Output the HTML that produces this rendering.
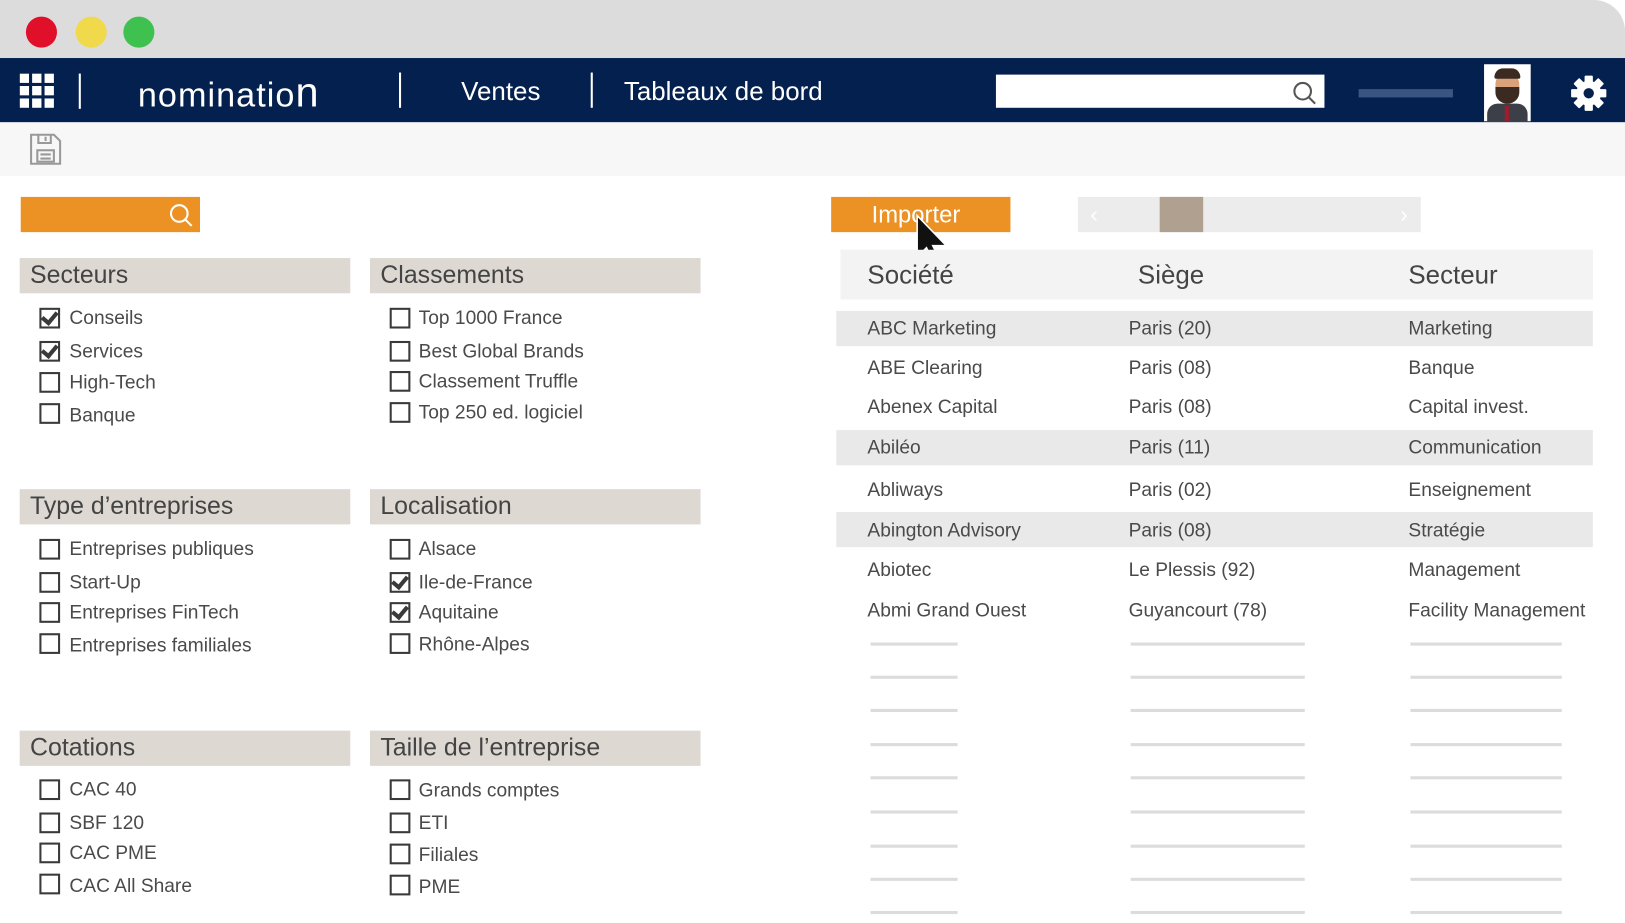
<!DOCTYPE html>
<html><head><meta charset="utf-8"><style>
*{margin:0;padding:0;box-sizing:border-box}
body{width:1625px;height:923px;overflow:hidden;background:#fff;font-family:"Liberation Sans",sans-serif}
#w{position:absolute;left:0;top:0;width:1568px;height:891px;transform:scale(1.03635);transform-origin:0 0}
.a{position:absolute}
.t{position:absolute;color:#4a4a4a;font-size:18.5px;white-space:nowrap;line-height:1;transform:translateY(-50%)}
.cb{position:absolute;width:20px;height:20px;border:2.5px solid #3a3a3a;transform:translateY(-50%)}
.cb.on::after{content:"";position:absolute;left:3px;top:-1px;width:6px;height:11px;border:solid #3a3a3a;border-width:0 4px 4px 0;transform:rotate(40deg)}
.h{position:absolute;height:34px;background:#ddd8d2;color:#444;font-size:24px;line-height:34px;padding-left:10px;width:319px}
.ln{position:absolute;height:3px;background:#dcdcdc}
</style></head><body><div id="w">
<div class="a" style="left:0;top:0;width:1568px;height:56px;background:#dcdcdc;border-top-right-radius:30px"></div>
<div class="a" style="left:25px;top:16px;width:30px;height:30px;border-radius:50%;background:#e0102a"></div>
<div class="a" style="left:73px;top:16px;width:30px;height:30px;border-radius:50%;background:#f1d94c"></div>
<div class="a" style="left:119px;top:16px;width:30px;height:30px;border-radius:50%;background:#3ec14f"></div>
<div class="a" style="left:0;top:56px;width:1568px;height:62px;background:#04204f"></div>
<svg class="a" style="left:19px;top:71px" width="34" height="34" fill="#fff"><rect x="0" y="0" width="9" height="9"/><rect x="12" y="0" width="9" height="9"/><rect x="24" y="0" width="9" height="9"/><rect x="0" y="12" width="9" height="9"/><rect x="12" y="12" width="9" height="9"/><rect x="24" y="12" width="9" height="9"/><rect x="0" y="24" width="9" height="9"/><rect x="12" y="24" width="9" height="9"/><rect x="24" y="24" width="9" height="9"/></svg>
<div class="a" style="left:76px;top:71px;width:2px;height:34px;background:#fff"></div>
<div class="t" style="left:133px;top:90px;color:#fff;font-size:33px;letter-spacing:1px">nominatio<span style="font-size:40px">n</span></div>
<div class="a" style="left:385px;top:70px;width:2px;height:34px;background:#fff"></div>
<div class="t" style="left:445px;top:89px;color:#fff;font-size:25px">Ventes</div>
<div class="a" style="left:570px;top:70px;width:2px;height:34px;background:#fff"></div>
<div class="t" style="left:602px;top:89px;color:#fff;font-size:25px">Tableaux de bord</div>
<div class="a" style="left:961px;top:72px;width:317px;height:32px;background:#fff"></div>
<svg class="a" style="left:1247px;top:78px" width="24" height="24" fill="none" stroke="#555" stroke-width="2"><circle cx="10" cy="10" r="8"/><path d="M16 16l6 6"/></svg>
<div class="a" style="left:1311px;top:86px;width:91px;height:8px;background:#3b5582"></div>
<div class="a" style="left:1432px;top:62px;width:45px;height:55px;background:#fff;overflow:hidden">
<div class="a" style="left:3px;top:38px;width:39px;height:20px;background:#3c3f48;border-radius:10px 10px 0 0"></div>
<div class="a" style="left:20px;top:40px;width:4px;height:15px;background:#a01c2c"></div>
<div class="a" style="left:11px;top:9px;width:23px;height:28px;background:#d9a27b;border-radius:10px"></div>
<div class="a" style="left:11px;top:22px;width:23px;height:16px;background:#3a2a1f;border-radius:0 0 11px 11px"></div>
<div class="a" style="left:10px;top:4px;width:25px;height:10px;background:#3a2a1f;border-radius:10px 10px 2px 2px"></div>
</div>
<svg class="a" style="left:1515px;top:72px" width="36" height="36" viewBox="0 0 36 36"><g fill="#fff"><circle cx="18" cy="18" r="12"/><rect x="14" y="1" width="8" height="34" rx="1"/><rect x="14" y="1" width="8" height="34" rx="1" transform="rotate(45 18 18)"/><rect x="14" y="1" width="8" height="34" rx="1" transform="rotate(90 18 18)"/><rect x="14" y="1" width="8" height="34" rx="1" transform="rotate(135 18 18)"/></g><circle cx="18" cy="18" r="5" fill="#04204f"/></svg>
<div class="a" style="left:0;top:118px;width:1568px;height:52px;background:#f7f7f7"></div>
<svg class="a" style="left:28px;top:128px" width="32" height="32" fill="none" stroke="#999" stroke-width="2"><path d="M2 2h22l6 6v22H2z"/><path d="M9 2v8h12V2M16 4v4"/><rect x="8" y="17" width="16" height="11"/><path d="M11 21h10M11 25h10"/></svg>
<div class="a" style="left:20px;top:190px;width:173px;height:34px;background:#ec9224"></div>
<svg class="a" style="left:162px;top:195px" width="26" height="26" fill="none" stroke="#fff" stroke-width="2"><circle cx="11" cy="11" r="8"/><path d="M17 17l6 6"/></svg>
<div class="a" style="left:802px;top:190px;width:173px;height:34px;background:#ec9224"></div>
<div class="t" style="left:841px;top:207px;color:#fff;font-size:23px">Importer</div>
<svg class="a" style="left:882px;top:206px" width="34" height="54"><path d="M3 2v40l9-9 8 17 6-3-8-16h13z" fill="#111" stroke="#fff" stroke-width="1.5"/></svg>
<div class="a" style="left:1040px;top:190px;width:331px;height:34px;background:#ececec"></div>
<div class="a" style="left:1119px;top:190px;width:42px;height:34px;background:#b0a08f"></div>
<div class="t" style="left:1052px;top:207px;color:#fff;font-size:22px">‹</div>
<div class="t" style="left:1351px;top:207px;color:#fff;font-size:22px">›</div>

<div class="h" style="left:19px;top:249px">Secteurs</div>
<div class="h" style="left:357px;top:249px">Classements</div>
<div class="h" style="left:19px;top:472px">Type d’entreprises</div>
<div class="h" style="left:357px;top:472px">Localisation</div>
<div class="h" style="left:19px;top:705px">Cotations</div>
<div class="h" style="left:357px;top:705px">Taille de l’entreprise</div>

<div class="cb on" style="left:38px;top:307px"></div><div class="t" style="left:67px;top:307px">Conseils</div>
<div class="cb on" style="left:38px;top:339px"></div><div class="t" style="left:67px;top:339px">Services</div>
<div class="cb" style="left:38px;top:369px"></div><div class="t" style="left:67px;top:369px">High-Tech</div>
<div class="cb" style="left:38px;top:399px"></div><div class="t" style="left:67px;top:401px">Banque</div>
<div class="cb" style="left:376px;top:307px"></div><div class="t" style="left:404px;top:307px">Top 1000 France</div>
<div class="cb" style="left:376px;top:339px"></div><div class="t" style="left:404px;top:339px">Best Global Brands</div>
<div class="cb" style="left:376px;top:368px"></div><div class="t" style="left:404px;top:368px">Classement Truffle</div>
<div class="cb" style="left:376px;top:398px"></div><div class="t" style="left:404px;top:398px">Top 250 ed. logiciel</div>

<div class="cb" style="left:38px;top:530px"></div><div class="t" style="left:67px;top:530px">Entreprises publiques</div>
<div class="cb" style="left:38px;top:562px"></div><div class="t" style="left:67px;top:562px">Start-Up</div>
<div class="cb" style="left:38px;top:591px"></div><div class="t" style="left:67px;top:591px">Entreprises FinTech</div>
<div class="cb" style="left:38px;top:621px"></div><div class="t" style="left:67px;top:623px">Entreprises familiales</div>
<div class="cb" style="left:376px;top:530px"></div><div class="t" style="left:404px;top:530px">Alsace</div>
<div class="cb on" style="left:376px;top:562px"></div><div class="t" style="left:404px;top:562px">Ile-de-France</div>
<div class="cb on" style="left:376px;top:591px"></div><div class="t" style="left:404px;top:591px">Aquitaine</div>
<div class="cb" style="left:376px;top:621px"></div><div class="t" style="left:404px;top:622px">Rhône-Alpes</div>

<div class="cb" style="left:38px;top:762px"></div><div class="t" style="left:67px;top:762px">CAC 40</div>
<div class="cb" style="left:38px;top:794px"></div><div class="t" style="left:67px;top:794px">SBF 120</div>
<div class="cb" style="left:38px;top:823px"></div><div class="t" style="left:67px;top:823px">CAC PME</div>
<div class="cb" style="left:38px;top:853px"></div><div class="t" style="left:67px;top:855px">CAC All Share</div>
<div class="cb" style="left:376px;top:762px"></div><div class="t" style="left:404px;top:763px">Grands comptes</div>
<div class="cb" style="left:376px;top:794px"></div><div class="t" style="left:404px;top:794px">ETI</div>
<div class="cb" style="left:376px;top:824px"></div><div class="t" style="left:404px;top:825px">Filiales</div>
<div class="cb" style="left:376px;top:854px"></div><div class="t" style="left:404px;top:856px">PME</div>

<div class="a" style="left:811px;top:241px;width:726px;height:48px;background:#f3f3f3"></div>
<div class="t" style="left:837px;top:266px;font-size:25px;color:#444">Société</div>
<div class="t" style="left:1098px;top:266px;font-size:25px;color:#444">Siège</div>
<div class="t" style="left:1359px;top:266px;font-size:25px;color:#444">Secteur</div>
<div class="a" style="left:807px;top:300px;width:730px;height:34px;background:#e9e9e9"></div>
<div class="a" style="left:807px;top:415px;width:730px;height:34px;background:#e9e9e9"></div>
<div class="a" style="left:807px;top:494px;width:730px;height:34px;background:#e9e9e9"></div>
<div class="t" style="left:837px;top:317px">ABC Marketing</div><div class="t" style="left:1089px;top:317px">Paris (20)</div><div class="t" style="left:1359px;top:317px">Marketing</div>
<div class="t" style="left:837px;top:355px">ABE Clearing</div><div class="t" style="left:1089px;top:355px">Paris (08)</div><div class="t" style="left:1359px;top:355px">Banque</div>
<div class="t" style="left:837px;top:393px">Abenex Capital</div><div class="t" style="left:1089px;top:393px">Paris (08)</div><div class="t" style="left:1359px;top:393px">Capital invest.</div>
<div class="t" style="left:837px;top:432px">Abiléo</div><div class="t" style="left:1089px;top:432px">Paris (11)</div><div class="t" style="left:1359px;top:432px">Communication</div>
<div class="t" style="left:837px;top:473px">Abliways</div><div class="t" style="left:1089px;top:473px">Paris (02)</div><div class="t" style="left:1359px;top:473px">Enseignement</div>
<div class="t" style="left:837px;top:512px">Abington Advisory</div><div class="t" style="left:1089px;top:512px">Paris (08)</div><div class="t" style="left:1359px;top:512px">Stratégie</div>
<div class="t" style="left:837px;top:550px">Abiotec</div><div class="t" style="left:1089px;top:550px">Le Plessis (92)</div><div class="t" style="left:1359px;top:550px">Management</div>
<div class="t" style="left:837px;top:589px">Abmi Grand Ouest</div><div class="t" style="left:1089px;top:589px">Guyancourt (78)</div><div class="t" style="left:1359px;top:589px">Facility Management</div>
<div id="lines"></div>
</div>
<script>
var ys=[620,652,684,717,749,782,815,847,879],h='';
ys.forEach(function(y){h+='<div class="ln" style="left:840px;top:'+y+'px;width:84px"></div><div class="ln" style="left:1091px;top:'+y+'px;width:168px"></div><div class="ln" style="left:1361px;top:'+y+'px;width:146px"></div>'});
document.getElementById('lines').innerHTML=h;
</script>
</body></html>
